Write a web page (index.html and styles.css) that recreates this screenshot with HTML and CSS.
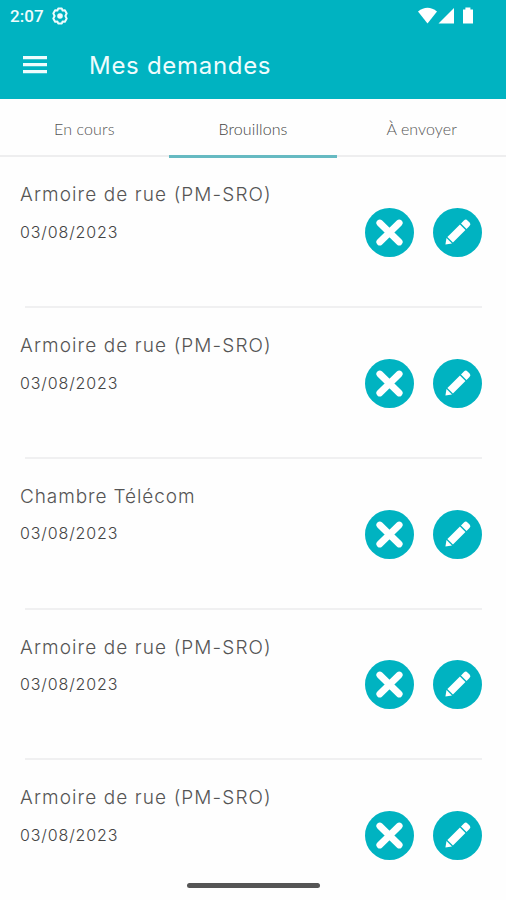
FILE: index.html
```html
<!DOCTYPE html>
<html lang="fr">
<head>
<meta charset="utf-8">
<title>Mes demandes</title>
<link rel="stylesheet" href="styles.css">
</head>
<body>
<svg width="0" height="0" class="defs">
  <symbol id="close" viewBox="0 0 49 49"><circle cx="24.5" cy="24.5" r="24.5" fill="#00b3c1"/><path d="M14.8 15 34.2 34M34.2 15 14.8 34" stroke="#fff" stroke-width="6.8" stroke-linecap="round"/></symbol>
  <symbol id="edit" viewBox="0 0 49 49"><circle cx="24.5" cy="24.5" r="24.5" fill="#00b3c1"/><g transform="translate(12 37) rotate(-45)" fill="#fff"><path d="M.6 0 6-3.9V3.9Z"/><path d="M7.3-3.9H25V3.9H7.3Z"/><path d="M26.5-3.9h4.2q2.6 0 2.6 2.4v3q0 2.4-2.6 2.4h-4.2Z"/></g></symbol>
</svg>
<div class="screen">
  <header class="header">
    <div class="status">
      <span class="clock">2:07</span>
      <svg class="gear" width="18" height="18" viewBox="0 0 18 18" fill="none" stroke="#effcfd"><path d="M7.2 1.5h3.6l.8 2.1 2.3-.3 1.8 3.1L14.4 9l1.3 2.6-1.8 3.1-2.3-.3-.8 2.1H7.2l-.8-2.1-2.3.3-1.8-3.1L3.6 9 2.3 6.4l1.8-3.1 2.3.3Z" stroke-width="2" stroke-linejoin="round"/><circle cx="9" cy="9" r="2.8" fill="#effcfd" stroke="none"/></svg>
      <svg class="signals" width="58" height="18" viewBox="0 0 58 18" fill="#fff"><path d="M0 4.5Q9.5-3 19 4.5L9.5 16.5Z"/><path d="M20.5 16.5 36 1V16.5Z"/><path d="M45 2.6h2.4V.5h5v2.1H55v13.9H45Z"/></svg>
    </div>
    <div class="bar">
      <svg class="menu" width="24" height="18" viewBox="0 0 24 18" fill="#effcfd"><path d="M0 0h24v3.2H0zM0 7h24v3.2H0zM0 14h24v3.2H0z"/></svg>
      <h1 class="heading">Mes demandes</h1>
    </div>
  </header>
  <nav class="tabs">
    <div class="tab">En cours</div>
    <div class="tab active">Brouillons</div>
    <div class="tab">À envoyer</div>
  </nav>
  <main class="list">
    <article class="row"><div class="info"><h2 class="title">Armoire de rue (PM-SRO)</h2><p class="date">03/08/2023</p></div><div class="actions"><svg class="icon"><use href="#close"/></svg><svg class="icon"><use href="#edit"/></svg></div></article>
    <article class="row"><div class="info"><h2 class="title">Armoire de rue (PM-SRO)</h2><p class="date">03/08/2023</p></div><div class="actions"><svg class="icon"><use href="#close"/></svg><svg class="icon"><use href="#edit"/></svg></div></article>
    <article class="row"><div class="info"><h2 class="title chambre">Chambre Télécom</h2><p class="date">03/08/2023</p></div><div class="actions"><svg class="icon"><use href="#close"/></svg><svg class="icon"><use href="#edit"/></svg></div></article>
    <article class="row"><div class="info"><h2 class="title">Armoire de rue (PM-SRO)</h2><p class="date">03/08/2023</p></div><div class="actions"><svg class="icon"><use href="#close"/></svg><svg class="icon"><use href="#edit"/></svg></div></article>
    <article class="row"><div class="info"><h2 class="title">Armoire de rue (PM-SRO)</h2><p class="date">03/08/2023</p></div><div class="actions"><svg class="icon"><use href="#close"/></svg><svg class="icon"><use href="#edit"/></svg></div></article>
  </main>
  <div class="home"></div>
</div>
</body>
</html>
```
FILE: styles.css
```css
* { box-sizing: border-box; }
body, h1, h2, p { margin: 0; }
body { background: #fefefe; font-family: Inter, sans-serif; }
.defs { position: absolute; }
.screen { position: relative; width: 506px; height: 900px; overflow: hidden; background: #fefefe; }
.header { height: 98.5px; background: #00b3c1; color: #effcfd; }
.status { display: flex; align-items: center; height: 32px; padding: 0 30px 0 10px; }
.clock { font: 500 17px/32px Roboto, sans-serif; width: 41px; letter-spacing: .1px; }
.gear { display: block; }
.signals { display: block; margin-left: auto; }
.bar { display: flex; align-items: center; height: 66px; padding-left: 23px; }
.menu { display: block; margin-right: 42px; }
.heading { font-size: 24px; line-height: 66px; font-weight: 400; letter-spacing: .7px; white-space: nowrap; padding-top: 1px; }
.tabs { display: flex; height: 59.5px; }
.tab { flex: 1; border-bottom: 2px solid #eeeeef; margin-bottom: 1px; text-align: center; font: 300 16px/59px Lato, sans-serif; letter-spacing: .1px; color: #555; }
.active { border-bottom: 3px solid #66bac2; margin-bottom: 0; color: #444; }
.list { display: flex; flex-direction: column; }
.row { display: flex; flex: none; justify-content: space-between; height: 150.75px; padding: 25.4px 24px 0 20px; background: linear-gradient(#f0f0f1, #f0f0f1) 25px 148px / 457px 2px no-repeat; }
.title { font-size: 19px; line-height: 24px; font-weight: 300; letter-spacing: 1.1px; color: #555; white-space: nowrap; }
.chambre { letter-spacing: .9px; }
.date { margin-top: 14.5px; font-size: 16px; line-height: 20px; font-weight: 300; letter-spacing: .87px; color: #444; }
.actions { display: flex; gap: 19px; padding-top: 24.8px; }
.icon { display: block; width: 49px; height: 49px; }
.home { position: absolute; left: 187px; top: 883px; width: 133px; height: 5px; border-radius: 3px; background: #555; }
```
